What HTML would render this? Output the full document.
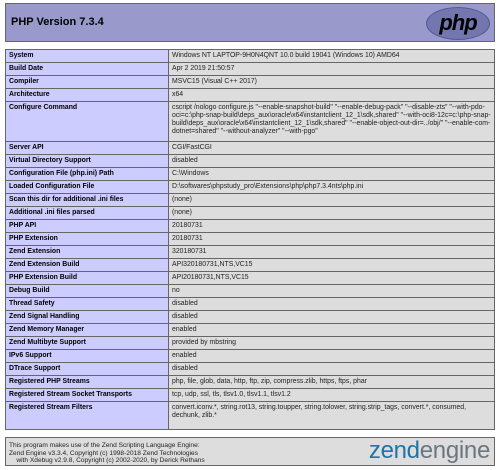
<!DOCTYPE html>
<html><head><meta charset="utf-8"><style>
html,body{margin:0;padding:0;background:#fff;width:500px;height:470px;overflow:hidden}
body{font-family:"Liberation Sans",Verdana,sans-serif;font-size:6.9px;color:#222}
.wrap{position:absolute;left:5px;width:490px}
table{border-collapse:collapse;width:490px;table-layout:fixed}
td{border:1px solid #666;padding:0 3px;vertical-align:middle;height:12px;line-height:8px}
td.e{background:#ccf;font-weight:bold;width:156px;color:#000}
td.v{background:#ddd}
.top td{vertical-align:top;padding-top:2px}
.h{position:absolute;left:5px;top:3px;width:488px;height:37px;background:#99c;border:1px solid #666}
.h h1{margin:0;position:absolute;left:5px;top:12px;font-size:11px;font-weight:bold;color:#000}
.logo{position:absolute;right:4px;top:3px;width:62px;height:31px;border-radius:50%;background:#7377ad;border:1px solid #4f5b93}
.logo span{position:absolute;left:0;right:0;top:2px;text-align:center;font:italic bold 22px "Liberation Sans",sans-serif;color:#000;letter-spacing:-1px}
.f{position:absolute;left:5px;top:437px;width:488px;height:27px;background:#ddd;border:1px solid #666}
.f p{margin:0;position:absolute;left:3px;top:4px;line-height:7.5px;font-size:6.6px}
.zend{position:absolute;right:4px;top:-1px;font-size:24px;color:#1a6fa0;letter-spacing:-0.3px}
.zend b{font-weight:normal;color:#1f74a8}
.zend i{font-style:normal;color:#6b7680}
</style></head><body>
<div class="h"><h1>PHP Version 7.3.4</h1><div class="logo"><span>php</span></div></div>
<div class="wrap" style="top:49px">
<table>
<tr><td class="e">System</td><td class="v">Windows NT LAPTOP-9H0N4QNT 10.0 build 19041 (Windows 10) AMD64</td></tr>
<tr><td class="e">Build Date</td><td class="v">Apr 2 2019 21:50:57</td></tr>
<tr><td class="e">Compiler</td><td class="v">MSVC15 (Visual C++ 2017)</td></tr>
<tr><td class="e">Architecture</td><td class="v">x64</td></tr>
<tr class="top" style="height:40px"><td class="e">Configure Command</td><td class="v">cscript /nologo configure.js "--enable-snapshot-build" "--enable-debug-pack" "--disable-zts" "--with-pdo-oci=c:\php-snap-build\deps_aux\oracle\x64\instantclient_12_1\sdk,shared" "--with-oci8-12c=c:\php-snap-build\deps_aux\oracle\x64\instantclient_12_1\sdk,shared" "--enable-object-out-dir=../obj/" "--enable-com-dotnet=shared" "--without-analyzer" "--with-pgo"</td></tr>
<tr><td class="e">Server API</td><td class="v">CGI/FastCGI</td></tr>
<tr><td class="e">Virtual Directory Support</td><td class="v">disabled</td></tr>
<tr><td class="e">Configuration File (php.ini) Path</td><td class="v">C:\Windows</td></tr>
<tr><td class="e">Loaded Configuration File</td><td class="v">D:\softwares\phpstudy_pro\Extensions\php\php7.3.4nts\php.ini</td></tr>
<tr><td class="e">Scan this dir for additional .ini files</td><td class="v">(none)</td></tr>
<tr><td class="e">Additional .ini files parsed</td><td class="v">(none)</td></tr>
<tr><td class="e">PHP API</td><td class="v">20180731</td></tr>
<tr><td class="e">PHP Extension</td><td class="v">20180731</td></tr>
<tr><td class="e">Zend Extension</td><td class="v">320180731</td></tr>
<tr><td class="e">Zend Extension Build</td><td class="v">API320180731,NTS,VC15</td></tr>
<tr><td class="e">PHP Extension Build</td><td class="v">API20180731,NTS,VC15</td></tr>
<tr><td class="e">Debug Build</td><td class="v">no</td></tr>
<tr><td class="e">Thread Safety</td><td class="v">disabled</td></tr>
<tr><td class="e">Zend Signal Handling</td><td class="v">disabled</td></tr>
<tr><td class="e">Zend Memory Manager</td><td class="v">enabled</td></tr>
<tr><td class="e">Zend Multibyte Support</td><td class="v">provided by mbstring</td></tr>
<tr><td class="e">IPv6 Support</td><td class="v">enabled</td></tr>
<tr><td class="e">DTrace Support</td><td class="v">disabled</td></tr>
<tr><td class="e">Registered PHP Streams</td><td class="v">php, file, glob, data, http, ftp, zip, compress.zlib, https, ftps, phar</td></tr>
<tr><td class="e">Registered Stream Socket Transports</td><td class="v">tcp, udp, ssl, tls, tlsv1.0, tlsv1.1, tlsv1.2</td></tr>
<tr class="top" style="height:28px"><td class="e">Registered Stream Filters</td><td class="v">convert.iconv.*, string.rot13, string.toupper, string.tolower, string.strip_tags, convert.*, consumed,<br>dechunk, zlib.*</td></tr>
</table></div>
<div class="f"><p>This program makes use of the Zend Scripting Language Engine:<br>Zend Engine v3.3.4, Copyright (c) 1998-2018 Zend Technologies<br>&nbsp;&nbsp;&nbsp;&nbsp;with Xdebug v2.9.8, Copyright (c) 2002-2020, by Derick Rethans</p>
<div class="zend"><b>zend</b><i>engine</i></div></div>
</body></html>
